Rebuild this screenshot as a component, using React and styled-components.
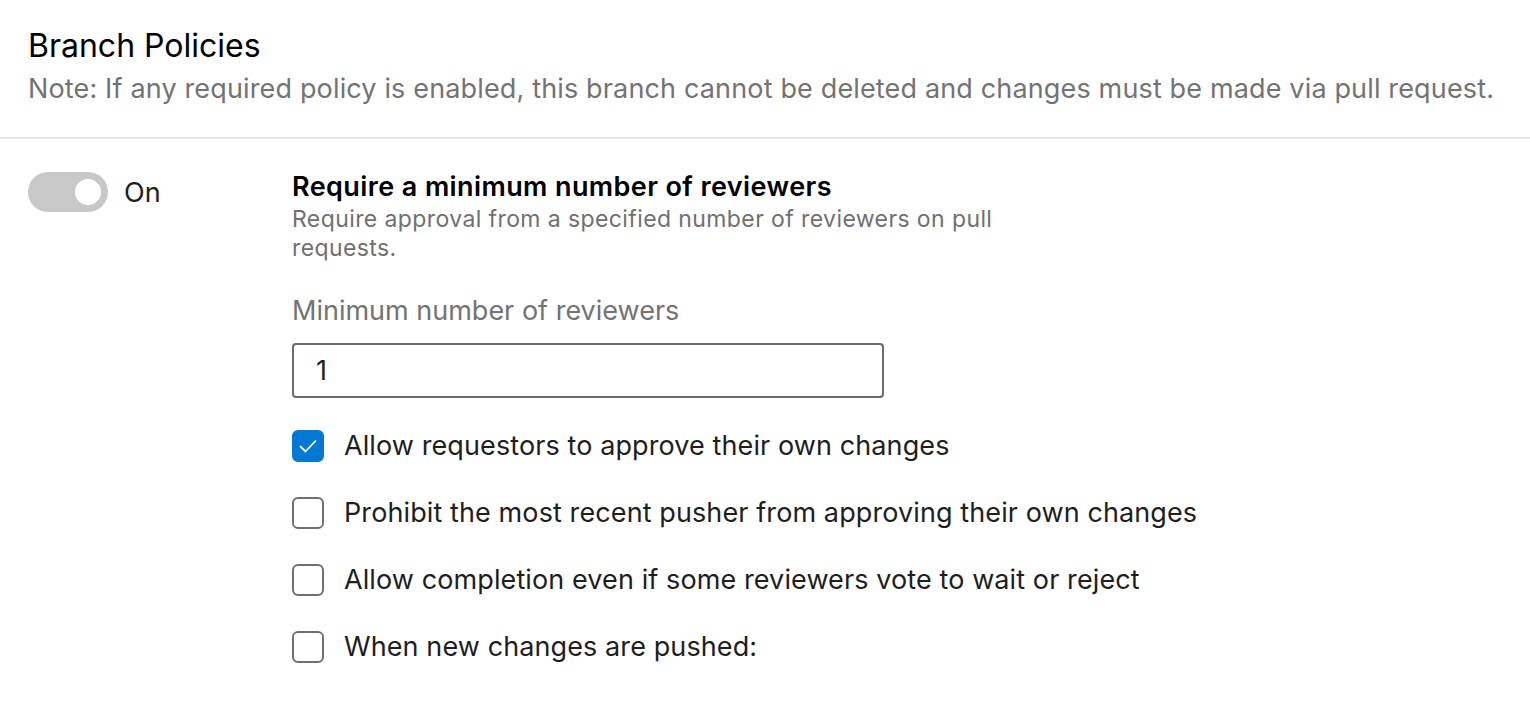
import React, { useState } from 'react';
import styled, { createGlobalStyle } from 'styled-components';

const GlobalStyle = createGlobalStyle`
  html, body {
    margin: 0;
    padding: 0;
    background: #fff;
  }
  body {
    font-family: Inter, "Noto Sans", "Liberation Sans", sans-serif;
    color: #1e1e1e;
  }
  * {
    box-sizing: border-box;
  }
`;

const Page = styled.div`
  width: 1530px;
  height: 705px;
  overflow: hidden;
`;

const Header = styled.div`
  padding: 26px 28px 31px;
  border-bottom: 2px solid #e9e9e9;
`;

const Title = styled.h1`
  margin: 0;
  font-size: 32px;
  line-height: 40px;
  font-weight: 400;
  color: #000;
`;

const Note = styled.p`
  margin: 6px 0 0;
  font-size: 27px;
  line-height: 34px;
  letter-spacing: 0.15px;
  color: #737373;
`;

const PolicyRow = styled.div`
  display: flex;
  align-items: flex-start;
  padding: 31px 28px 0;
`;

const ToggleCell = styled.div`
  display: flex;
  align-items: center;
  gap: 16px;
  width: 264px;
  height: 44px;
  flex-shrink: 0;
`;

const Track = styled.button`
  position: relative;
  width: 80px;
  height: 40px;
  border: none;
  border-radius: 20px;
  padding: 0;
  background: ${(p) => (p.$on ? '#c8c8c8' : '#e0e0e0')};
  cursor: pointer;
`;

const Knob = styled.span`
  position: absolute;
  top: 7px;
  left: ${(p) => (p.$on ? '47px' : '7px')};
  width: 26px;
  height: 26px;
  border-radius: 50%;
  background: #fff;
`;

const ToggleLabel = styled.span`
  font-size: 27px;
  color: #1e1e1e;
`;

const Content = styled.div`
  display: flex;
  flex-direction: column;
  margin-top: 1px;
`;

const PolicyTitle = styled.div`
  font-size: 27px;
  line-height: 32px;
  font-weight: 600;
  letter-spacing: 0.4px;
  color: #000;
`;

const PolicyDesc = styled.div`
  max-width: 720px;
  margin-top: 2px;
  font-size: 23px;
  line-height: 29px;
  letter-spacing: 0.4px;
  color: #707070;
`;

const FieldLabel = styled.label`
  margin-top: 32px;
  font-size: 27px;
  line-height: 32px;
  color: #737373;
`;

const NumberInput = styled.input`
  margin-top: 16px;
  width: 592px;
  height: 55px;
  padding: 0 22px;
  border: 2px solid #6b6b6b;
  border-radius: 4px;
  font-family: inherit;
  font-size: 27px;
  color: #1e1e1e;
  outline: none;
`;

const Options = styled.div`
  display: flex;
  flex-direction: column;
  gap: 35px;
  margin-top: 32px;
`;

const Option = styled.label`
  display: flex;
  align-items: center;
  gap: 20px;
  font-size: 27px;
  line-height: 32px;
  letter-spacing: 0.1px;
  color: #1e1e1e;
  cursor: pointer;
`;

const Box = styled.span`
  display: flex;
  align-items: center;
  justify-content: center;
  width: 32px;
  height: 32px;
  border-radius: 6px;
  border: 2px solid ${(p) => (p.$checked ? '#0078d4' : '#707070')};
  background: ${(p) => (p.$checked ? '#0078d4' : '#fff')};
  flex-shrink: 0;
`;

const Check = () => (
  <svg width="22" height="22" viewBox="0 0 22 22" fill="none">
    <path d="M3.5 11.5l5 5 10-10.5" stroke="#fff" strokeWidth="1.8" strokeLinecap="round" strokeLinejoin="round" />
  </svg>
);

const options = [
  { label: 'Allow requestors to approve their own changes', checked: true },
  { label: 'Prohibit the most recent pusher from approving their own changes', checked: false },
  { label: 'Allow completion even if some reviewers vote to wait or reject', checked: false },
  { label: 'When new changes are pushed:', checked: false },
];

const App = () => {
  const [on, setOn] = useState(true);
  const [checks, setChecks] = useState(options.map((o) => o.checked));

  const toggle = (i) => setChecks((c) => c.map((v, j) => (j === i ? !v : v)));

  return (
    <Page>
      <GlobalStyle />
      <Header>
        <Title>Branch Policies</Title>
        <Note>
          Note: If any required policy is enabled, this branch cannot be deleted and changes must be made via pull request.
        </Note>
      </Header>
      <PolicyRow>
        <ToggleCell>
          <Track $on={on} onClick={() => setOn(!on)}>
            <Knob $on={on} />
          </Track>
          <ToggleLabel>{on ? 'On' : 'Off'}</ToggleLabel>
        </ToggleCell>
        <Content>
          <PolicyTitle>Require a minimum number of reviewers</PolicyTitle>
          <PolicyDesc>
            Require approval from a specified number of reviewers on pull requests.
          </PolicyDesc>
          <FieldLabel>Minimum number of reviewers</FieldLabel>
          <NumberInput defaultValue="1" />
          <Options>
            {options.map((o, i) => (
              <Option key={o.label} onClick={() => toggle(i)}>
                <Box $checked={checks[i]}>{checks[i] && <Check />}</Box>
                {o.label}
              </Option>
            ))}
          </Options>
        </Content>
      </PolicyRow>
    </Page>
  );
};

export default App;
